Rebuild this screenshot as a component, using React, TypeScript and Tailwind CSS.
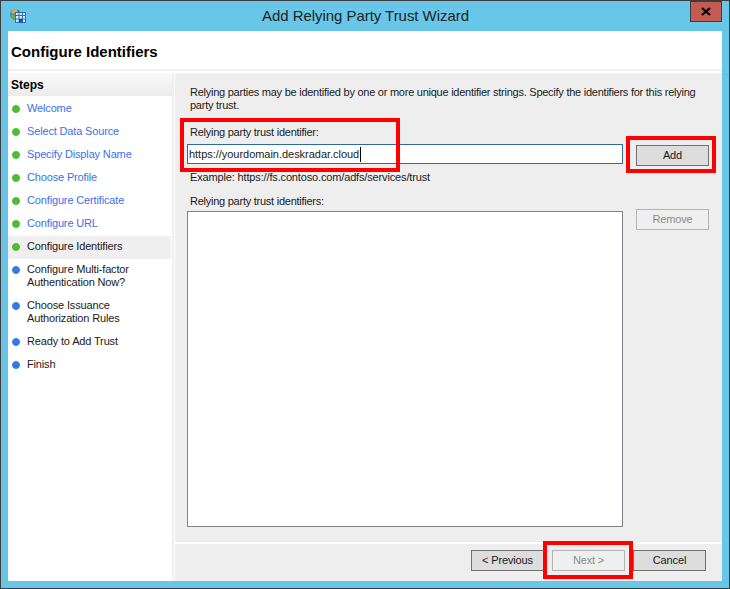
const steps = [
  { label: "Welcome", color: "green", link: true },
  { label: "Select Data Source", color: "green", link: true },
  { label: "Specify Display Name", color: "green", link: true },
  { label: "Choose Profile", color: "green", link: true },
  { label: "Configure Certificate", color: "green", link: true },
  { label: "Configure URL", color: "green", link: true },
  { label: "Configure Identifiers", color: "green", active: true },
  { label: "Configure Multi-factor Authentication Now?", color: "blue", wide: true },
  { label: "Choose Issuance Authorization Rules", color: "blue", wide: true },
  { label: "Ready to Add Trust", color: "blue" },
  { label: "Finish", color: "blue" },
];

function Dot({ color }: { color: string }) {
  return (
    <span
      className={
        color === "green"
          ? "mt-[3px] h-[8px] w-[8px] shrink-0 rounded-full border border-[#5cb040] bg-[#46c32c]"
          : "mt-[3px] h-[8px] w-[8px] shrink-0 rounded-full border border-[#3f7fd8] bg-[#2f7bea]"
      }
    />
  );
}

function WizardButton({ label, disabled }: { label: string; disabled?: boolean }) {
  return (
    <div
      className={
        disabled
          ? "flex h-[21px] w-[73px] shrink-0 items-center justify-center border border-[#b4b4b4] bg-[#efefef] text-[#8a8a8a]"
          : "flex h-[21px] w-[73px] shrink-0 items-center justify-center border border-[#707070] bg-[#dddddd] text-[#1a1a1a]"
      }
    >
      {label}
    </div>
  );
}

function GlobeIcon() {
  return (
    <svg width="18" height="18" viewBox="0 0 18 18" className="mt-[2px]">
      <circle cx="5.5" cy="6.5" r="5.5" fill="#2f8fc8" />
      <path d="M1 4 Q3 0.5 7 1 L7 4 L3 6 Z" fill="#e8a93a" />
      <path d="M0.5 7 L4 6.5 L6 10 L4 12 Q1 10.5 0.5 7 Z" fill="#6cb04a" />
      <rect x="5.5" y="4.5" width="10" height="10" fill="#dcecfa" stroke="#2a6fc0" />
      <path d="M5.5 7.5 H15.5 M5.5 11 H15.5 M9 4.5 V14.5 M12.5 4.5 V14.5" stroke="#2a6fc0" strokeWidth="1" />
      <rect x="9" y="11" width="3.5" height="3.5" fill="#1f4fa0" />
    </svg>
  );
}

export default function App() {
  return (
    <div className="relative flex h-[589px] w-[730px] flex-col border border-b-0 border-[#3d3d3d] bg-[#68c6e8] font-['Liberation_Sans',sans-serif] text-[11px] leading-[13px] tracking-[-0.15px] text-[#1a1a1a]">
      <div className="flex h-[30px] shrink-0 items-center pl-[9px] pr-[7px]">
        <GlobeIcon />
        <div className="mb-[1px] flex-1 pl-[13px] text-center text-[15px] tracking-[-0.05px] text-[#222222]">
          Add Relying Party Trust Wizard
        </div>
        <div className="mb-[9px] flex h-[21px] w-[32px] items-center justify-center border border-[#3d3d3d] bg-[#c45a52]">
          <svg width="10" height="9" viewBox="0 0 10 9">
            <path d="M1 1 L9 8 M9 1 L1 8" stroke="#000000" strokeWidth="2.2" />
          </svg>
        </div>
      </div>

      <div className="mx-[7px] flex h-[550px] flex-col bg-white">
        <div className="flex h-[40px] shrink-0 items-center border-b-2 border-[#efefef] px-[3px] pt-[2px] text-[15px] font-bold tracking-normal text-black">
          Configure Identifiers
        </div>
        <div className="flex min-h-0 flex-1 pt-[2px]">
          <div className="w-[166px] shrink-0 border-r-2 border-[#efefef]">
            <div className="flex h-[23px] items-center bg-gradient-to-b from-[#f9f9f9] to-[#ececec] pl-[3px] pt-[1px] text-[12px] font-bold tracking-normal text-black">
              Steps
            </div>
            <div className="flex flex-col gap-[10px] pt-[6px]">
              {steps.map((step) => (
                <div
                  key={step.label}
                  className={
                    step.active
                      ? "-mb-[6px] -mt-[4px] flex h-[23px] w-[163px] gap-[7px] bg-[#efefef] pl-[4px] pr-[5px] pt-[4px]"
                      : "flex min-h-[13px] w-[163px] gap-[7px] pl-[4px] pr-[5px]"
                  }
                >
                  <Dot color={step.color} />
                  <span className={step.link ? "text-[#3b6fe8]" : step.wide ? "w-[118px]" : ""}>{step.label}</span>
                </div>
              ))}
            </div>
          </div>

          <div className="ml-[1px] flex min-w-0 flex-1 flex-col bg-[#eeeeee]">
            <div className="flex min-h-0 flex-1 flex-col pl-[12px] pr-[13px] pt-[13px]">
              <p className="ml-[3px] w-[520px] tracking-[-0.25px]">
                Relying parties may be identified by one or more unique identifier strings. Specify the identifiers for this relying party trust.
              </p>
              <div className="ml-[3px] mt-[14px] tracking-[-0.25px]">Relying party trust identifier:</div>
              <div className="mt-[5px] flex items-start gap-[13px]">
                <div className="flex h-[20px] w-[436px] items-center border border-[#2f6a9c] bg-white pl-[1px] tracking-[-0.03px] text-[#1a1a1a]">
                  <span>https://yourdomain.deskradar.cloud</span>
                  <span className="ml-[1px] h-[15px] w-px bg-black" />
                </div>
                <div className="mt-[1px]">
                  <WizardButton label="Add" />
                </div>
              </div>
              <div className="ml-[3px] mt-[5px]">Example: https://fs.contoso.com/adfs/services/trust</div>
              <div className="ml-[3px] mt-[11px] tracking-[-0.25px]">Relying party trust identifiers:</div>
              <div className="mt-[1px] flex min-h-0 flex-1 items-start gap-[13px] pb-[15px]">
                <div className="mt-[2px] w-[436px] self-stretch border border-[#7f848a] bg-white" />
                <WizardButton label="Remove" disabled />
              </div>
            </div>
            <div className="flex h-[39px] shrink-0 items-start justify-end gap-[8px] border-t-2 border-white pr-[16px] pt-[6px]">
              <WizardButton label="< Previous" />
              <WizardButton label="Next >" disabled />
              <WizardButton label="Cancel" />
            </div>
          </div>
        </div>
      </div>
      <div className="absolute bottom-0 left-[-1px] right-[-1px] h-px bg-[#3d3d3d]" />

      <div className="absolute left-[179px] top-[117px] h-[54px] w-[220px] border-[4px] border-[#ff0000]" />
      <div className="absolute left-[625px] top-[135px] h-[37px] w-[90px] border-[4px] border-[#ff0000]" />
      <div className="absolute left-[542px] top-[540px] h-[38px] w-[90px] border-[4px] border-[#ff0000]" />
    </div>
  );
}
